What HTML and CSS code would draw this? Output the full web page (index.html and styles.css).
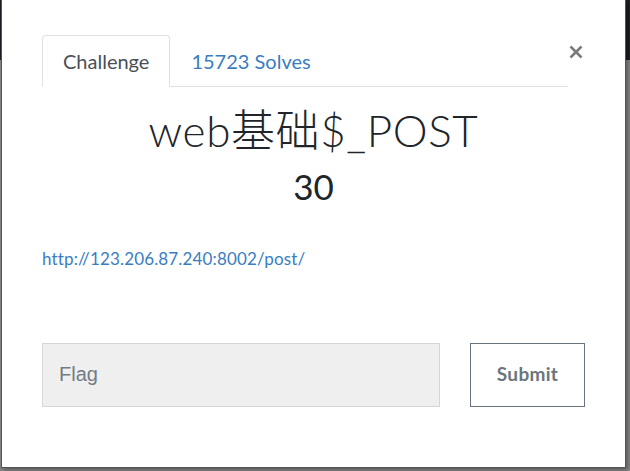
FILE: index.html
```html
<!DOCTYPE html>
<html lang="zh">
<head>
<meta charset="utf-8">
<title>Challenge</title>
<link rel="stylesheet" href="styles.css">
</head>
<body>
<div class="backdrop">
  <div class="modal">
    <div class="modal-head">
      <ul class="tabs">
        <li class="tab active"><span class="tab-link">Challenge</span></li>
        <li class="tab"><span class="tab-link solves">15723 Solves</span></li>
      </ul>
      <button class="close" aria-label="Close">
        <svg width="14" height="14" viewBox="0 0 14 14"><path d="M1.5 1.5 L12.5 12.5 M12.5 1.5 L1.5 12.5" stroke="#7b7b7b" stroke-width="2.6" stroke-linecap="butt" fill="none"/></svg>
      </button>
    </div>
    <h3 class="chal-name">web基础$_POST</h3>
    <div class="chal-value">30</div>
    <div class="chal-desc"><a class="link" href="#">http://123.206.87.240:8002/post/</a></div>
    <form class="submit-row">
      <input class="flag-input" type="text" placeholder="Flag">
      <button class="submit-btn" type="button">Submit</button>
    </form>
  </div>
</div>
</body>
</html>
```

FILE: styles.css
```css
html, body {
  margin: 0;
  padding: 0;
  height: 100%;
}
body {
  background: linear-gradient(#1c1f23 0, #1c1f23 60px, #878787 60px);
  font-family: "Lato", "Noto Sans CJK SC", sans-serif;
  overflow: hidden;
}
.backdrop {
  padding-left: 1px;
}
.modal {
  box-sizing: border-box;
  width: 625px;
  background: #fff;
  border: 1px solid #555;
  border-top: 0;
  box-shadow: 2px 2px 4px rgba(0, 0, 0, 0.35);
  padding: 35px 40px 60px 40px;
}
.modal-head {
  display: flex;
  align-items: flex-start;
}
.tabs {
  flex: 1;
  display: flex;
  list-style: none;
  margin: 0;
  padding: 0;
  border-bottom: 1px solid #dee2e6;
}
.tab {
  margin-bottom: -1px;
}
.tab-link {
  display: block;
  padding: 13px 20px;
  font-size: 20px;
  line-height: 24px;
  border: 1px solid transparent;
  border-top-left-radius: 4px;
  border-top-right-radius: 4px;
  color: #3a7dbf;
}
.tab.active .tab-link {
  color: #495057;
  border-color: #dee2e6 #dee2e6 #fff;
  background: #fff;
}
.close {
  width: 17px;
  padding: 10px 0 0 1px;
  margin: 0;
  border: 0;
  background: transparent;
  display: flex;
  justify-content: flex-start;
}
.chal-name {
  margin: 17px 0 0;
  text-align: center;
  font-family: "Lato", "Noto Sans CJK SC", sans-serif;
  font-weight: 300;
  font-size: 44px;
  line-height: 52px;
  color: #212529;
  letter-spacing: 0.6px;
}
.chal-value {
  margin-top: 9px;
  text-align: center;
  font-size: 35px;
  line-height: 42px;
  color: #212529;
}
.chal-desc {
  margin-top: 40px;
  font-size: 17px;
  line-height: 24px;
  letter-spacing: 0.15px;
}
.link {
  color: #3a7dbf;
  text-decoration: none;
}
.submit-row {
  margin: 72px 0 0;
  display: grid;
  grid-template-columns: 1fr 115px;
  gap: 30px;
}
.flag-input {
  box-sizing: border-box;
  height: 64px;
  margin: 0;
  padding: 0 16px 2px;
  border: 1px solid #d4d6da;
  background: #efefef;
  font-family: "Liberation Sans", Arial, sans-serif;
  font-size: 20px;
  color: #495057;
  outline: none;
}
.flag-input::placeholder {
  color: #737b83;
  opacity: 1;
}
.submit-btn {
  box-sizing: border-box;
  height: 64px;
  margin: 0;
  padding: 0 0 4px;
  border: 1px solid #68737d;
  background: #fff;
  font-family: "Lato", sans-serif;
  font-weight: 700;
  font-size: 19px;
  color: #6c757d;
  letter-spacing: 0.3px;
}
```
